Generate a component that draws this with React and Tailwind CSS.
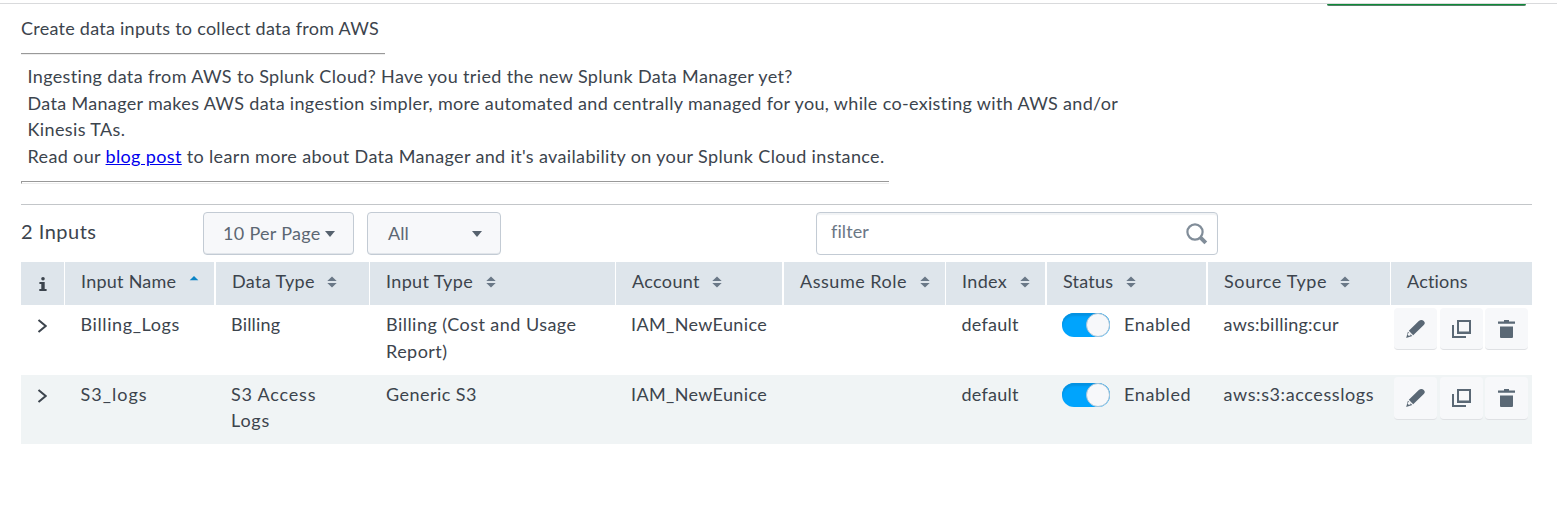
function SortIcon({ active }) {
  if (active) {
    return (
      <svg className="block h-[11px] w-[10px] shrink-0" viewBox="0 0 10 11">
        <path d="M5 0 9.3 4.3H.7z" fill="#0b84c6" />
      </svg>
    );
  }
  return (
    <svg className="block h-[12px] w-[10px] shrink-0" viewBox="0 0 10 12">
      <path d="M5 .4 9.7 5H.3zM5 11.6 9.7 7H.3z" fill="#6a7887" />
    </svg>
  );
}

function Caret() {
  return (
    <svg className="block h-[6px] w-[10px] shrink-0" viewBox="0 0 10 6">
      <path d="M0 0h10L5 6z" fill="#56626e" />
    </svg>
  );
}

function Head({ className, label, spacing, active, sortable = true }) {
  return (
    <div className={`flex h-[43px] border-white bg-[#dee5eb] pl-[16px] pt-[6px] ${className}`}>
      <span className={`whitespace-nowrap leading-[27px] ${spacing}`}>{label}</span>
      {sortable && (
        <span className={active ? "ml-auto mr-[15px] pt-[8px]" : "ml-[12.5px] pt-[8px]"}>
          <SortIcon active={active} />
        </span>
      )}
    </div>
  );
}

function ActionButton({ children, className }) {
  return (
    <button className={`flex w-[43px] items-start rounded-[4px] border-b border-[#dfe1e4] bg-[#f7f8fa] pl-[11px] pt-[11px] ${className}`}>
      <svg className="block h-[20px] w-[20px]" viewBox="0 0 20 20" fill="#5a6875">
        {children}
      </svg>
    </button>
  );
}

function Toggle() {
  return (
    <span className="flex h-[24px] w-[48px] shrink-0 justify-end rounded-full bg-[#00a4fd] shadow-[inset_0_3px_2px_#0492e2]">
      <span className="h-[24px] w-[24px] rounded-full border border-[#a9c4d8] bg-[#f7f8fa]" />
    </span>
  );
}

const columns = "grid grid-cols-[43px_150px_155px_246px_167px_163px_100px_161px_184px_142px]";

function Row({ name, nameSpacing, type, typeSpacing, input, source, sourceSpacing, className, buttonClass, actionsClass }) {
  return (
    <div className={`${columns} ${className}`}>
      <div className="pl-[16px] pt-[14px]">
        <svg className="block h-[14px] w-[10px]" viewBox="0 0 10 14">
          <path d="M1.5 .9 8.7 7l-7.200 6.1" fill="none" stroke="#3c444d" strokeWidth="2" />
        </svg>
      </div>
      <div className={`pl-[16.5px] pt-[6px] ${nameSpacing}`}>{name}</div>
      <div className={`whitespace-pre pl-[17px] pt-[6px] ${typeSpacing}`}>{type}</div>
      <div className="whitespace-pre pl-[17px] pt-[6px] tracking-[0.46px]">{input}</div>
      <div className="pl-[16px] pt-[6px] tracking-[0.36px]">IAM_NewEunice</div>
      <div />
      <div className="pl-[16.5px] pt-[6px] tracking-[0.25px]">default</div>
      <div className="flex gap-[14px] pl-[17px] pt-[8px]">
        <Toggle />
        <span className="-mt-[2px] tracking-[0.6px]">Enabled</span>
      </div>
      <div className={`pl-[17.5px] pt-[6px] ${sourceSpacing}`}>{source}</div>
      <div className={`flex items-start pl-[4px] ${actionsClass}`}>
        <ActionButton className={buttonClass}>
          <path d="M13.8 2.1c.9-.8 1.600-1.200 2.500-1.200 1.900 0 3.500 1.500 3.500 3.200 0 .8-.4 1.400-1 2L8.200 16.200 3.800 11.800zM2.900 12.700l4.400 4.400-6.100 2z" />
          <circle cx="4.200" cy="15.400" r="1.400" fill="#f7f8fa" />
        </ActionButton>
        <ActionButton className={`ml-[3px] ${buttonClass}`}>
          <path fillRule="evenodd" d="M6 1h14v14H6zM8 3v9.500h10V3zM1 6h2v11h12v2H1z" />
        </ActionButton>
        <ActionButton className={`ml-[2px] ${buttonClass}`}>
          <path d="M8 1h5v1.500h6v2.300H2V2.500h6zM4 7.500h13V18q0 1-1 1H5q-1 0-1-1z" />
        </ActionButton>
      </div>
    </div>
  );
}

export default function App() {
  return (
    <div className="h-[528px] overflow-hidden bg-white font-['Lato',sans-serif] text-[18px] text-[#3c444d]">
      <div className="h-[6px] pt-[3px]">
        <div className="h-px bg-[#d9dadc]" />
        <div className="ml-[1327px] h-[2px] w-[199px] rounded-b-[2px] border-b border-[#557d69] bg-[#0d8b37]" />
      </div>
      <div className="pl-[21px] pr-[25px]">
        <h1 className="h-[47px] whitespace-nowrap pt-[9px] leading-[27px] tracking-[0.26px]">
          Create data inputs to collect data from AWS
        </h1>
        <hr className="h-[2px] w-[364px] border-b border-t border-b-[#eeeeee] border-t-[#999999]" />
        <div className="h-[126px] whitespace-nowrap pl-[6.5px] pt-[8px] leading-[26.67px]">
          <p className="tracking-[0.35px]">Ingesting data from AWS to Splunk Cloud? Have you tried the new Splunk Data Manager yet?</p>
          <p className="tracking-[0.33px]">Data Manager makes AWS data ingestion simpler, more automated and centrally managed for you, while co-existing with AWS and/or</p>
          <p className="tracking-[0.38px]">Kinesis TAs.</p>
          <p className="tracking-[0.355px]">
            Read our <a className="text-[#0000ee] underline">blog post</a> to learn more about Data Manager and it's availability on your Splunk Cloud instance.
          </p>
        </div>
        <div className="h-[3px] w-[868px] border border-r-0 border-b-[#eeeeee] border-l-[#999999] border-t-[#999999]" />
        <div className="mt-[20px] h-px bg-[#c3c6c9]" />
        <div className="flex h-[57px] items-start pt-[7px]">
          <div className="w-[182px] text-[20px] leading-[39px] tracking-[0.5px]">2 Inputs</div>
          <button className="flex h-[43px] w-[151px] items-center rounded-[4px] border border-[#c3cbd4] bg-[#f7f8fa] pl-[19px] text-[#5c6773] shadow-[inset_0_-1px_0_#e1e5ea]">
            <span className="-mt-[1px] w-[102px] whitespace-nowrap text-left tracking-[0.3px]">10 Per Page</span>
            <Caret />
          </button>
          <button className="ml-[13px] flex h-[43px] w-[134px] items-center rounded-[4px] border border-[#c3cbd4] bg-[#f7f8fa] pl-[20px] text-[#5c6773] shadow-[inset_0_-1px_0_#e1e5ea]">
            <span className="-mt-[1px] w-[84px] text-left">All</span>
            <Caret />
          </button>
          <div className="ml-[315px] flex h-[43px] w-[402px] items-center justify-between rounded-[4px] border border-[#c3cbd4] bg-white pl-[14px] pr-[9px] text-[#6b7785] shadow-[inset_0_2px_1px_#f1f3f5]">
            <span className="-mt-[4px] tracking-[0.1px]">filter</span>
            <svg className="block h-[22px] w-[22px]" viewBox="0 0 22 22" fill="none" stroke="#818d99">
              <circle cx="9" cy="9" r="7.600" strokeWidth="2.200" />
              <path d="m14.300 14.300 5.500 5.500" strokeWidth="4" />
            </svg>
          </div>
        </div>
        <div className={columns}>
          <div className="flex h-[43px] bg-[#dee5eb] pl-[17.5px] pt-[15px]">
            <svg className="block h-[14px] w-[8px]" viewBox="0 0 8 14" fill="#3c444d">
              <circle cx="4" cy="1.800" r="1.800" />
              <path d="M.400 5h5.300v7h1.900v2H.300v-2h2V7H.400z" />
            </svg>
          </div>
          <Head className="border-l" label="Input Name" spacing="tracking-[0.25px]" active />
          <Head className="border-l-2" label="Data Type" spacing="tracking-[0.35px]" />
          <Head className="border-l" label="Input Type" spacing="tracking-[0.35px]" />
          <Head className="border-l" label="Account" spacing="tracking-[0.35px]" />
          <Head className="border-l-2" label="Assume Role" spacing="tracking-[0.52px]" />
          <Head className="border-l" label="Index" spacing="tracking-[0.35px]" />
          <Head className="border-l-2" label="Status" spacing="tracking-[0.2px]" />
          <Head className="border-l-2" label="Source Type" spacing="tracking-[0.65px]" />
          <Head className="border-l" label="Actions" spacing="tracking-[0.2px]" sortable={false} />
        </div>
        <Row
          className="h-[70px] leading-[26.67px]"
          name="Billing_Logs"
          nameSpacing="tracking-[0.6px]"
          type="Billing"
          typeSpacing="tracking-[0.2px]"
          input={"Billing (Cost and Usage\nReport)"}
          source="aws:billing:cur"
          sourceSpacing="tracking-[0.25px]"
          actionsClass="pt-[3px]"
          buttonClass="h-[42px]"
        />
        <Row
          className="h-[69px] bg-[#f0f4f5] leading-[26px]"
          name="S3_logs"
          nameSpacing="tracking-[1px]"
          type={"S3 Access\nLogs"}
          typeSpacing="tracking-[0.8px]"
          input="Generic S3"
          source="aws:s3:accesslogs"
          sourceSpacing="tracking-[0.6px]"
          actionsClass="pt-[2px]"
          buttonClass="h-[43px]"
        />
      </div>
    </div>
  );
}
